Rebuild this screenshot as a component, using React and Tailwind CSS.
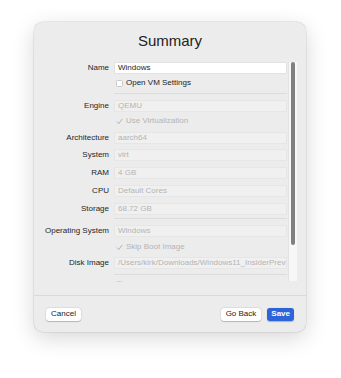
import React from 'react';

const font = { fontFamily: '"Liberation Sans", Arial, sans-serif' };

const Check = () => (
  <svg width="7" height="7" viewBox="0 0 7 7" className="shrink-0">
    <polyline points="1,3.8 2.8,5.6 6,1.2" fill="none" stroke="#b3b3b3" strokeWidth="1" strokeLinecap="round" strokeLinejoin="round" />
  </svg>
);

const Field = ({ label, value, active, className = '' }) => (
  <div className={`flex shrink-0 items-center h-[12px] ${className}`}>
    <div className="w-[75px] pr-[5px] text-right text-[8px] text-[#1f1f1f] leading-none whitespace-nowrap">{label}</div>
    <div
      className={`flex-1 min-w-0 h-[12px] flex items-center px-[3px] text-[8px] leading-none overflow-hidden whitespace-nowrap ${
        active
          ? 'bg-white text-[#1d1d1d] border border-[#e2e2e2]'
          : 'bg-[#f0f0f0] text-[#b4b4b4] border border-[#e6e6e6]'
      }`}
    >
      {value}
    </div>
  </div>
);

const CheckRow = ({ text, checked, className = '' }) => (
  <div className={`flex shrink-0 items-center h-[14px] ${className}`}>
    <div className="w-[75px]" />
    <div className="flex items-center gap-[3.5px] pl-[1.5px]">
      {checked ? (
        <Check />
      ) : (
        <div className="w-[7px] h-[7px] bg-white border border-[#c9c9c9] rounded-[1.5px]" />
      )}
      <span className={`text-[8px] leading-none ${checked ? 'text-[#b4b4b4]' : 'text-[#1d1d1d]'}`}>{text}</span>
    </div>
  </div>
);

const Separator = ({ className = '' }) => (
  <div className={`flex shrink-0 ${className}`}>
    <div className="w-[75px]" />
    <div className="flex-1 h-px bg-[#dcdcdc]" />
  </div>
);

export default function App() {
  return (
    <div className="w-[341px] min-h-[378px] bg-white pt-[22px] pl-[34px]" style={font}>
      <div className="w-[272px] h-[310px] bg-[#ececec] rounded-[9px] shadow-[0_6px_22px_rgba(0,0,0,0.16),0_0_0_0.5px_rgba(0,0,0,0.12)] flex flex-col overflow-hidden">
        {/* Title */}
        <div className="h-[38px] shrink-0 flex items-center justify-center text-[15px] text-[#222]">Summary</div>

        {/* Scroll view */}
        <div className="h-[222px] shrink-0 flex pr-[9px] overflow-hidden">
          <div className="flex-1 min-w-0 flex flex-col pl-[5px] pr-[1px] overflow-hidden">
            <Field label="Name" value="Windows" active className="mt-[2px]" />
            <CheckRow text="Open VM Settings" className="mt-[2px]" />
            <Separator className="mt-[3px]" />
            <Field label="Engine" value="QEMU" className="mt-[5.5px]" />
            <CheckRow text="Use Virtualization" checked className="mt-[2.5px]" />
            <Field label="Architecture" value="aarch64" className="mt-[3.5px]" />
            <Field label="System" value="virt" className="mt-[5.75px]" />
            <Field label="RAM" value="4 GB" className="mt-[5.75px]" />
            <Field label="CPU" value="Default Cores" className="mt-[5.75px]" />
            <Field label="Storage" value="68.72 GB" className="mt-[5.75px]" />
            <Separator className="mt-[3.5px]" />
            <Field label="Operating System" value="Windows" className="mt-[5.5px]" />
            <CheckRow text="Skip Boot Image" checked className="mt-[3.5px]" />
            <Field
              label="Disk Image"
              value="/Users/kirk/Downloads/Windows11_InsiderPreview_Client_ARM64_en-us_22598.VHDX"
              className="mt-[3px]"
            />
            <Separator className="mt-[5px]" />
            <div className="flex shrink-0 items-center h-[14px] mt-[2px]">
              <div className="w-[75px]" />
              <div className="w-[7px] h-[7px] ml-[1.5px] border border-[#d2d2d2] rounded-[1.5px]" />
            </div>
          </div>
          {/* Scrollbar */}
          <div className="w-[9px] shrink-0 mt-[2px] mb-[1px] bg-[#f7f7f7] border-l border-[#e3e3e3] flex justify-center">
            <div className="w-[4.5px] h-[183px] bg-[#808080] rounded-full" />
          </div>
        </div>

        {/* Footer */}
        <div className="mt-[13px] flex-1 border-t border-[#d9d9d9] flex items-center justify-between px-[12px]">
          <button className="h-[13px] px-[5px] bg-white rounded-[3px] text-[8px] leading-none text-[#222] shadow-[0_0.5px_1px_rgba(0,0,0,0.2),0_0_0_0.5px_rgba(0,0,0,0.08)]">
            Cancel
          </button>
          <div className="flex items-center gap-[6px]">
            <button className="h-[13px] px-[5px] bg-white rounded-[3px] text-[8px] leading-none text-[#222] shadow-[0_0.5px_1px_rgba(0,0,0,0.2),0_0_0_0.5px_rgba(0,0,0,0.08)]">
              Go Back
            </button>
            <button className="h-[13px] px-[4px] bg-[#2d64d8] rounded-[3px] text-[8px] leading-none text-white font-semibold shadow-[0_0.5px_1px_rgba(0,0,0,0.25)]">
              Save
            </button>
          </div>
        </div>
      </div>
    </div>
  );
}
